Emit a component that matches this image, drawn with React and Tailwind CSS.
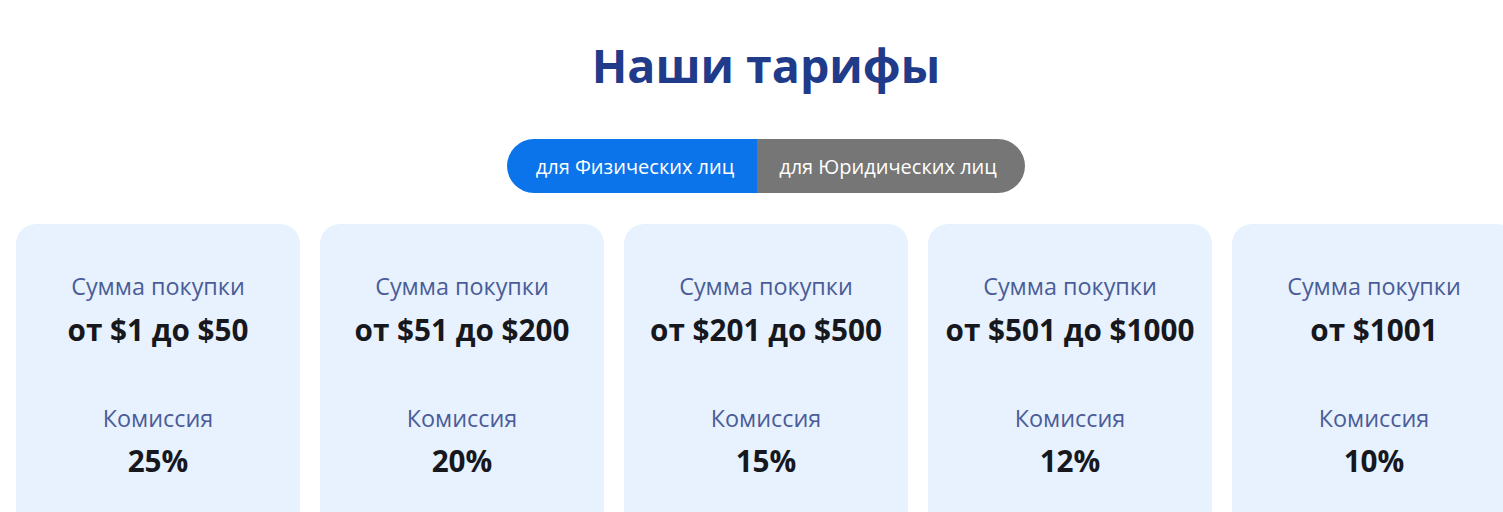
const tariffs = [
  { range: "от $1 до $50", fee: "25%" },
  { range: "от $51 до $200", fee: "20%" },
  { range: "от $201 до $500", fee: "15%" },
  { range: "от $501 до $1000", fee: "12%" },
  { range: "от $1001", fee: "10%" },
];

export default function App() {
  return (
    <div className="h-[512px] w-full overflow-hidden bg-white font-['Open_Sans',sans-serif]">
      <div className="w-[1532px] px-4">
        <h2 className="pt-[30px] text-center text-[46.5px] font-bold leading-[70px] text-[#1f3b8a]">
          Наши тарифы
        </h2>

        <div className="mt-[39px] flex justify-center">
          <div className="flex h-[54px] overflow-hidden rounded-full text-[20px]">
            <button className="w-[250px] bg-[#0b74ea] pl-[6px] pt-px text-white">для Физических лиц</button>
            <button className="w-[268px] bg-[#767676] pr-[6px] pt-px text-white">для Юридических лиц</button>
          </div>
        </div>

        <div className="mt-[31px] flex gap-5">
          {tariffs.map((t) => (
            <div
              key={t.range}
              className="flex h-[320px] w-[284px] shrink-0 flex-col items-center rounded-[20px] bg-[#e8f2fe] pt-[46px] text-center"
            >
              <p className="text-[23.4px] leading-[32px] text-[#4a5d99]">Сумма покупки</p>
              <p className="mt-[8px] text-[29.7px] font-bold leading-[40px] text-[#16181d]">{t.range}</p>
              <p className="mt-[52px] text-[23.4px] leading-[32px] text-[#4a5d99]">Комиссия</p>
              <p className="mt-[7px] text-[29.7px] font-bold leading-[40px] text-[#16181d]">{t.fee}</p>
            </div>
          ))}
        </div>
      </div>
    </div>
  );
}
